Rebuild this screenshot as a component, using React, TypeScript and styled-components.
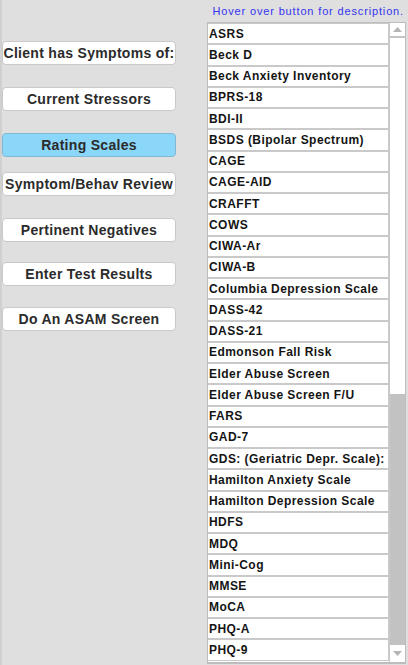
import React from "react";
import styled, { createGlobalStyle } from "styled-components";

const GlobalStyle = createGlobalStyle`
  html, body {
    margin: 0;
    padding: 0;
    background: #dfdfdf;
  }
  body {
    font-family: "Liberation Sans", Arial, sans-serif;
  }
`;

const Page = styled.div`
  width: 408px;
  height: 665px;
  display: flex;
  overflow: hidden;
  background: #dfdfdf;
`;

const SideBar = styled.div`
  width: 205px;
  border-left: 2px solid #d0d0d0;
  display: flex;
  flex-direction: column;
`;

const NavButton = styled.div<{ $gap: number; $active?: boolean }>`
  margin-top: ${(p) => p.$gap}px;
  width: 174px;
  height: 24px;
  box-sizing: border-box;
  display: flex;
  align-items: center;
  justify-content: center;
  white-space: nowrap;
  border: 1px solid ${(p) => (p.$active ? "#7fb9d6" : "#c9c9c9")};
  border-radius: 4px;
  background: ${(p) => (p.$active ? "#8bd7fa" : "#ffffff")};
  font-size: 14px;
  font-weight: bold;
  letter-spacing: 0.3px;
  color: #2b2b2b;
`;

const Panel = styled.div`
  display: flex;
  flex-direction: column;
  width: 199px;
`;

const Hint = styled.div`
  height: 22px;
  box-sizing: border-box;
  padding-top: 5px;
  padding-right: 2px;
  text-align: right;
  font-size: 11px;
  line-height: 13px;
  letter-spacing: 0.85px;
  color: #3434ee;
  white-space: nowrap;
`;

const ListBox = styled.div`
  display: flex;
  height: 639px;
  border: 1px solid #bdbdbd;
  border-bottom-width: 2px;
  background: #ffffff;
`;

const Rows = styled.div`
  flex: 1;
  display: flex;
  flex-direction: column;
  overflow: hidden;
`;

const Row = styled.div`
  flex: 0 0 21.25px;
  box-sizing: border-box;
  border: 1px solid #c9c9c9;
  border-left: none;
  display: flex;
  align-items: center;
  padding-left: 1px;
  font-size: 12px;
  font-weight: bold;
  letter-spacing: 0.45px;
  color: #141414;
  white-space: nowrap;
  overflow: hidden;
`;

const ScrollBar = styled.div`
  width: 15px;
  display: flex;
  flex-direction: column;
  border-left: 1px solid #c9c9c9;
`;

const ArrowBox = styled.div<{ $down?: boolean }>`
  height: 15px;
  box-sizing: border-box;
  display: flex;
  align-items: center;
  justify-content: center;
  background: #ffffff;
  border-bottom: ${(p) => (p.$down ? "none" : "2px solid #c4c4c4")};
  flex: ${(p) => (p.$down ? "1" : "none")};
`;

const Track = styled.div`
  height: 356px;
  background: #ffffff;
`;

const Thumb = styled.div`
  height: 251px;
  background: #c2c2c2;
`;

const Arrow = ({ down }: { down?: boolean }) => (
  <svg width="9" height="5" viewBox="0 0 9 5">
    <polygon
      points={down ? "0,0 9,0 4.5,5" : "0,5 9,5 4.5,0"}
      fill="#b4b4b4"
    />
  </svg>
);

const navItems = [
  { label: "Client has Symptoms of:", gap: 41 },
  { label: "Current Stressors", gap: 22 },
  { label: "Rating Scales", gap: 22, active: true },
  { label: "Symptom/Behav Review", gap: 15 },
  { label: "Pertinent Negatives", gap: 22 },
  { label: "Enter Test Results", gap: 20 },
  { label: "Do An ASAM Screen", gap: 21 },
];

const scales = [
  "ASRS",
  "Beck D",
  "Beck Anxiety Inventory",
  "BPRS-18",
  "BDI-II",
  "BSDS (Bipolar Spectrum)",
  "CAGE",
  "CAGE-AID",
  "CRAFFT",
  "COWS",
  "CIWA-Ar",
  "CIWA-B",
  "Columbia Depression Scale",
  "DASS-42",
  "DASS-21",
  "Edmonson Fall Risk",
  "Elder Abuse Screen",
  "Elder Abuse Screen F/U",
  "FARS",
  "GAD-7",
  "GDS: (Geriatric Depr. Scale):",
  "Hamilton Anxiety Scale",
  "Hamilton Depression Scale",
  "HDFS",
  "MDQ",
  "Mini-Cog",
  "MMSE",
  "MoCA",
  "PHQ-A",
  "PHQ-9",
];

const App = () => {
  return (
    <Page>
      <GlobalStyle />
      <SideBar>
        {navItems.map((item) => (
          <NavButton key={item.label} $gap={item.gap} $active={item.active}>
            {item.label}
          </NavButton>
        ))}
      </SideBar>
      <Panel>
        <Hint>Hover over button for description.</Hint>
        <ListBox>
          <Rows>
            {scales.map((name) => (
              <Row key={name}>{name}</Row>
            ))}
          </Rows>
          <ScrollBar>
            <ArrowBox>
              <Arrow />
            </ArrowBox>
            <Track />
            <Thumb />
            <ArrowBox $down>
              <Arrow down />
            </ArrowBox>
          </ScrollBar>
        </ListBox>
      </Panel>
    </Page>
  );
};

export default App;
